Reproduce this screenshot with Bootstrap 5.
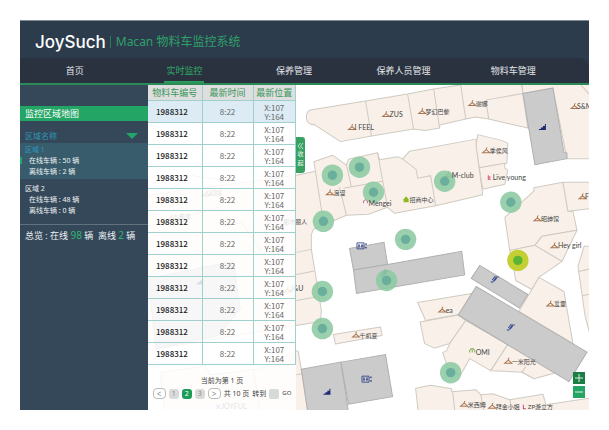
<!DOCTYPE html>
<html lang="zh-CN">
<head>
<meta charset="utf-8">
<meta name="viewport" content="width=device-width, initial-scale=1">
<title>JoySuch Macan 物料车监控系统</title>
<link href="https://cdn.jsdelivr.net/npm/bootstrap@5.3.0/dist/css/bootstrap.min.css" rel="stylesheet">
<style>
  :root { --green: #22a565; --green-dark: #2c8a57; --ink: #2c3c4d; }
  body { font-family: "Noto Sans", "Noto Sans CJK SC", sans-serif; font-size: 9px; line-height: 12px; background: #fff; }
  button, input { font: inherit; color: inherit; }
  .page { padding: 20px; }
  .app { background: var(--ink); border-top: 1px solid #7f8c96; }
  .brand-bar { height: 37px; padding: 5px 15px 0; }
  .brand-name { font: 500 17px/24px Inter, "Liberation Sans", sans-serif; color: #fff; }
  .brand-title { font-size: 12px; line-height: 12px; color: #2fa068; border-left: 1px solid #2b7a59; padding-left: 5px; margin-left: 4px; }
  .main-nav { background: #2a3240; border-bottom: 2px solid var(--green-dark); border-top-right-radius: 10px; padding-right: 21px; }
  .main-nav .nav-link { padding: 6px 2px 3px; color: #e4e7ea; line-height: 14px; border-bottom: 2px solid transparent; }
  .main-nav .nav-link.active { color: #2fa864; border-color: #2c9a5a; }

  .side { width: 128px; background: #34485a; color: #eef2f4; padding-top: 21px; }
  .side-title { background: var(--green); color: #fff; font-size: 9px; line-height: 15px; padding-left: 5px; margin: 0 0 8px; font-weight: 400; }
  .side-head { color: #2e97b3; font-size: 8px; line-height: 14px; padding: 0 10px 0 5px; }
  .caret { border: 6px solid transparent; border-top: 6px solid var(--green); border-bottom: 0; }
  .zone { display: block; width: 100%; text-align: left; border: 0; background: none; font-size: 7px; line-height: 11px; padding: 1px 0 2px 5px; }
  .zone.current { background: #385c6b; }
  .zone.current .zone-name { color: #2a9bc0; }
  .zone + .zone { padding-top: 4px; }
  .zone-line { display: block; padding-left: 4px; }
  .zone-mark { width: 2px; height: 7px; left: 0; top: 14px; background: var(--green); }
  .summary { border-top: 1px solid #60717f; margin-top: 6px; padding: 4px 0 0 5px; white-space: nowrap; }
  .summary b { font-weight: 400; font-size: 10px; color: #31b46e; }

  .map-area { background: #fff; }
  .map-svg { left: 0; top: 0; }
  .panel { width: 148px; background: rgba(255,255,255,.84); }
  .cars { width: 100%; table-layout: fixed; text-align: center; border-collapse: collapse; }
  .cars th { background: #dedede; color: #39965c; font-weight: 400; font-size: 9px; line-height: 15px; height: 15px; padding: 0; white-space: nowrap; }
  .cars td { height: 22px; padding: 0; font-family: "Noto Sans CJK SC", sans-serif; font-size: 8px; line-height: 9px; color: #666; }
  .cars td, .cars th { border-right: 1px solid #9fd0cd; border-bottom: 1px solid #9fd0cd; }
  .cars td:first-child { color: #222; font-weight: 500; text-align: left; padding-left: 8px; }
  .cars .picked td { background: #dcebf4; }
  .col-id { width: 54px; } .col-time { width: 51px; }
  .pager { font-size: 7px; line-height: 11px; color: #444; padding-top: 10px; }
  .pager-row { gap: 3px; margin-top: 2px; }
  .page-btn { border: 0; border-radius: 3px; background: #d8dbda; color: #888; width: 10px; height: 10px; padding: 0; line-height: 10px; font-size: 7px; }
  .page-btn.on { background: #1c9c58; color: #fff; }
  .step-btn { border: 1px solid #bbb; border-radius: 4px; background: #fff; color: #888; width: 13px; height: 11px; padding: 0; line-height: 8px; font-size: 8px; }
  .page-input { width: 10px; height: 10px; border: 0; border-radius: 2px; background: #d6dad9; padding: 0; }
  .go-btn { border: 0; background: none; padding: 0; font-size: 6px; }
  .fold-btn { left: 100%; top: 52px; width: 9px; height: 36px; border: 0; border-radius: 0 3px 3px 0; background: #38a162; color: #e9f7ee; padding: 0; font-size: 6px; line-height: 9px; }
  .fold-btn span, .fold-btn svg { display: block; margin: 0 auto; }
  .zoom-box { right: 4px; bottom: 12px; gap: 2px; }
  .zoom-box button { width: 12px; height: 12px; padding: 0; border: 0; background: var(--green); display: flex; }
  .zoom-box button:first-child { background: #1b7e45; }

  .shop { fill: #f9f1e9; stroke: #cfcac2; stroke-width: 1; stroke-linejoin: round; }
  .hall { fill: #cbcbcb; stroke: #b0b0b0; stroke-width: 1; }
  .wall { fill: none; stroke: #cfcac2; }
  .names text { font-family: Lato, "Noto Sans CJK SC", sans-serif; font-size: 7px; fill: #444; }
  .names .cn { font-size: 6px; }
  .hanger { fill: none; stroke: #a87652; stroke-width: 1; }
</style>
<script src="https://cdn.jsdelivr.net/npm/bootstrap@5.3.0/dist/js/bootstrap.bundle.min.js"></script>
</head>
<body>
<div class="page min-vh-100 d-flex flex-column">
  <div class="app flex-grow-1 d-flex flex-column">
    <header>
      <div class="brand-bar d-flex align-items-center">
        <span class="brand-name">JoySuch</span>
        <span class="brand-title">Macan 物料车监控系统</span>
      </div>
      <nav class="main-nav">
        <ul class="nav nav-fill row row-cols-5 g-0 flex-nowrap">
          <li class="col d-flex justify-content-center"><a class="nav-link" href="#">首页</a></li>
          <li class="col d-flex justify-content-center"><a class="nav-link active" aria-current="page" href="#">实时监控</a></li>
          <li class="col d-flex justify-content-center"><a class="nav-link" href="#">保养管理</a></li>
          <li class="col d-flex justify-content-center"><a class="nav-link" href="#">保养人员管理</a></li>
          <li class="col d-flex justify-content-center"><a class="nav-link" href="#">物料车管理</a></li>
        </ul>
      </nav>
    </header>

    <div class="d-flex flex-grow-1">
      <aside class="side flex-shrink-0">
        <h1 class="side-title">监控区域地图</h1>
        <div class="side-head d-flex justify-content-between align-items-center"><span>区域名称</span><span class="caret"></span></div>
        <button type="button" class="zone current position-relative"><span class="zone-mark position-absolute"></span><span class="zone-name">区域 1</span><span class="zone-line">在线车辆 : 50 辆</span><span class="zone-line">离线车辆 : 2 辆</span></button>
        <button type="button" class="zone"><span class="zone-name">区域 2</span><span class="zone-line">在线车辆 : 48 辆</span><span class="zone-line">离线车辆 : 0 辆</span></button>
        <div class="summary">总览 : 在线 <b>98</b> 辆&nbsp; 离线 <b>2</b> 辆</div>
      </aside>

      <main class="map-area flex-grow-1 position-relative d-flex">
        <svg class="map-svg position-absolute w-100 h-100" viewBox="148 85 440 325" preserveAspectRatio="xMinYMin slice" role="img" aria-label="监控区域地图">
          <defs>
            <path id="hg" class="hanger" d="M0 5.5L3.500 2.500L7 5.500ZM3.500 2.500V1.500Q3.500 .5 4.500 .5"/>
            <g id="car"><circle r="10.700" fill="#8cc9a3" fill-opacity=".88"/><circle r="4.700" fill="#6aaf9c"/></g>
            <path id="stair" d="M0 6V5H2V3.500H4V2H6V0H7V6Z" fill="#1d2b73"/>
            <g id="lift" fill="none" stroke="#24397f" stroke-width=".8"><path d="M.5 .5H7.500V6.500H.5Z"/><path d="M2.500 1.500V5.500M5.500 1.500V5.500M1.500 3.500H3.500M4.500 3.500H6.500"/><path d="M8.500 2.500L9.500 1L10 2.500M8.500 4.500L9.500 6L10 4.500"/></g>
            <path id="esc" d="M0 6.500H2L5.500 1.500H8M1.500 4.500L4.500 .5M3.500 5.500L6 2.500" fill="none" stroke="#3a4b8c"/>
          </defs>

          <g class="shop">
            <path d="M310 110L365 101L407 94L433 89L460 85V80H521V85L522 93.500L527 128L488 119L475 117L465 119L439 125V128L425 130.500L413 129L371 136L340 141.500L314 124.500Q307 125 306 118Q306 111 310 110Z"/>
            <path d="M521 80H592V158.500H566L552 88L522 93.500Z"/>
            <path d="M477 134.500L500 140L507 143L506 163L478.500 167.500L475 147Z"/>
            <path d="M478.500 167.500L504 163V168L507 170L504 184L482 189Z"/>
            <path d="M402 159L409 151L475.500 139V147L482 194.500L435 205.500L394 213L387 207L368 214L346 215L313 229L311 234V249L321 310L320 321L290 326L148 350V195L296 175L315 171L313.500 161.500L332 155L346 165L348 159L377 152.500L379 159.500L397 156.500Z"/>
            <path d="M504 217L533 191V187.500L562 182L567 211L572 211L576 230L541 236L534 245L509 250Z"/>
            <path d="M562 182H592V208L567 211Z"/>
            <path d="M541 236L576 230L561 261L534 245Z"/>
            <path d="M509 250L534 245L561 261L538 277L531 289L515 280Z"/>
            <path d="M538 277L563 291L572 343L518 311Z"/>
            <path d="M592 246H583L577 266L584 315L592 345Z"/>
            <path d="M417 302L471 293L458 314L425 320Z"/>
            <path d="M419.500 321.500L458 314.500L465 320L449 343L434 347.500L424 343Z"/>
            <path d="M465 320L507 344L490 370L469 358L460 374L449 373L442 352L446 350L449 343Z"/>
            <path d="M507 344L555 372L533 378L521 371.500L490 370Z"/>
            <path d="M415 387.500L430 384.500L451 388V391L475 389L480 394L492 393L509 399L542 393.500L545 404L592 397V415H418Z"/>
            <path d="M333 334L380 326.500L381.500 335L335 343.500Z"/>
            <path d="M160 372L205 365L210 374L260 368L296 350L298 351L301 369L308 415H165Z"/>
          </g>
          <path class="wall" d="M402 159L415.500 169L417 178L430 175.500L435 205.500M365 101L371 136M407 94L413 129M433 89L439 128M460 85L465 119M488 119L485 100L522 93.500M580 85L589 95M315 171L324 228M346 165L351 187M343 188L382 181M377 152.500L387 207M339 187L346 215M296 252L311 249M296 274L314 270.500M296 300L318 296M577.500 271L589 268.500M581.500 295L589 294M452 391L454 410M480 394L483 410M509 399L511 410M533 378L521 371.500L525 366M148 208L190 175L222 180V206L148 226M240 220L262 252M253 370L260 410M296 374L302 373"/>
          <g class="hall">
            <path d="M522 93.500L552 88L563 152L566 153V158.500L534 164.500Z"/>
            <path d="M349 248L383.500 242L387 264L353 269.500Z"/>
            <path d="M353 269.500L387 264L461 251L464 274.500L356 293Z"/>
            <path d="M479 265L527 294L518.500 307.500L470.500 278Z"/>
            <path d="M475.500 286L586 351.500L568 381L457.500 314.500Z"/>
            <path d="M301 368.500L340.500 361.500L348.500 415H308Z"/>
            <path d="M340.500 361.500L385 354L392 396L348 403.500Z"/>
            <path d="M148 278L233 261L240 308L218 335L156 348Z"/>
          </g>

          <use href="#stair" x="538" y="124"/><use href="#stair" x="323" y="388"/><use href="#stair" x="196" y="278"/>
          <use href="#lift" x="356" y="242"/><use href="#lift" x="361" y="375"/>
          <use href="#esc" x="490" y="275"/><use href="#esc" x="506" y="323"/><use href="#esc" x="380" y="269"/>

          <use href="#hg" x="348" y="124"/><use href="#hg" x="382" y="111"/><use href="#hg" x="418" y="108"/><use href="#hg" x="468" y="100"/><use href="#hg" x="570" y="103"/><use href="#hg" x="482" y="147"/><use href="#hg" x="326" y="189"/><use href="#hg" x="444" y="171"/><use href="#hg" x="533" y="215"/><use href="#hg" x="550" y="242"/><use href="#hg" x="578" y="193"/><use href="#hg" x="438" y="306"/><use href="#hg" x="546" y="300"/><use href="#hg" x="352" y="331"/><use href="#hg" x="504" y="357"/><use href="#hg" x="460" y="400"/><use href="#hg" x="488" y="402"/><use href="#hg" x="203" y="190"/><use href="#hg" x="168" y="214"/><use href="#hg" x="284" y="286"/>
          <path d="M403 199L405.500 196L408 199V202H403Z" fill="#8cba1c"/>
          <path d="M469 352V350Q471.500 346 474 350V352M471.500 349V352" fill="none" stroke="#7fae55"/>
          <path d="M487.500 175V179H490M489 176V178" fill="none" stroke="#d44a72"/>
          <path d="M363 203V201Q365 198 367 201V203" fill="none" stroke="#b79"/>
          <path d="M522.500 404V408H525" fill="none" stroke="#c2477a"/>
          <path d="M216 404L220 408M220 404L216 408" stroke="#6b6bd0"/>

          <g>
            <use href="#car" x="332" y="175"/><use href="#car" x="359" y="167"/><use href="#car" x="373" y="192"/>
            <use href="#car" x="444" y="181"/><use href="#car" x="510" y="202"/><use href="#car" x="323" y="221"/>
            <use href="#car" x="405" y="239"/><use href="#car" x="386" y="280"/><use href="#car" x="322" y="291"/>
            <use href="#car" x="322" y="328"/><use href="#car" x="450" y="372"/>
            <circle cx="517" cy="260" r="10.700" fill="#c3cf32"/><circle cx="517" cy="260" r="4.700" fill="#5cb531"/>
          </g>

          <g class="names">
            <text x="354" y="130">I FEEL</text><text x="389" y="117">ZUS</text><text class="cn" x="425" y="114">梦幻巴黎</text>
            <text class="cn" x="475" y="106">谢娜</text><text x="576" y="109">S&amp;M</text><text class="cn" x="489" y="153">季侯风</text>
            <text x="451" y="178">M-club</text><text x="492" y="180">Live young</text><text class="cn" x="333" y="195">浪漫</text>
            <text x="368" y="206">Mengei</text><text class="cn" x="409" y="202">招商中心</text><text class="cn" x="283" y="224">都市丽人</text>
            <text class="cn" x="540" y="221">昭绅馆</text><text x="557" y="248">Hey girl</text><text x="584" y="199">F</text>
            <text x="445" y="312">ea</text><text class="cn" x="553" y="306">爱童</text><text class="cn" x="359" y="337">千机变</text>
            <text x="475" y="354">OMI</text><text class="cn" x="511" y="363">一米阳光</text><text class="cn" x="467" y="406">米西姆</text>
            <text class="cn" x="495" y="408">拜金小姐</text><text class="cn" x="527" y="408">ZP游立方</text>
            <text x="209" y="196">K88</text><text class="cn" x="174" y="219">E·部落</text><text x="290" y="291">J&amp;U</text><text x="221" y="408">JOYFUL</text>
          </g>
        </svg>

        <section class="panel position-relative flex-shrink-0">
          <table class="cars">
            <colgroup><col class="col-id"><col class="col-time"><col></colgroup>
            <thead><tr><th scope="col">物料车编号</th><th scope="col">最新时间</th><th scope="col">最新位置</th></tr></thead>
            <tbody>
              <tr class="picked"><td>1988312</td><td>8:22</td><td>X:107<br>Y:164</td></tr>
              <tr><td>1988312</td><td>8:22</td><td>X:107<br>Y:164</td></tr>
              <tr><td>1988312</td><td>8:22</td><td>X:107<br>Y:164</td></tr>
              <tr><td>1988312</td><td>8:22</td><td>X:107<br>Y:164</td></tr>
              <tr><td>1988312</td><td>8:22</td><td>X:107<br>Y:164</td></tr>
              <tr><td>1988312</td><td>8:22</td><td>X:107<br>Y:164</td></tr>
              <tr><td>1988312</td><td>8:22</td><td>X:107<br>Y:164</td></tr>
              <tr><td>1988312</td><td>8:22</td><td>X:107<br>Y:164</td></tr>
              <tr><td>1988312</td><td>8:22</td><td>X:107<br>Y:164</td></tr>
              <tr><td>1988312</td><td>8:22</td><td>X:107<br>Y:164</td></tr>
              <tr><td>1988312</td><td>8:22</td><td>X:107<br>Y:164</td></tr>
              <tr><td>1988312</td><td>8:22</td><td>X:107<br>Y:164</td></tr>
            </tbody>
          </table>
          <div class="pager">
            <div class="text-center">当前为第 1 页</div>
            <div class="pager-row d-flex align-items-center justify-content-center text-nowrap">
              <button type="button" class="step-btn" aria-label="上一页">&lt;</button>
              <button type="button" class="page-btn">1</button>
              <button type="button" class="page-btn on">2</button>
              <button type="button" class="page-btn">3</button>
              <button type="button" class="step-btn" aria-label="下一页">&gt;</button>
              <span>共 10 页</span>
              <label for="goto">转到</label>
              <input id="goto" class="page-input" type="text">
              <button type="button" class="go-btn">GO</button>
            </div>
          </div>
          <button type="button" class="fold-btn position-absolute"><svg width="7" height="8" viewBox="0 0 7 8"><path d="M3.500 1L1 4L3.500 7M6 1L3.500 4L6 7" fill="none" stroke="#d5f0df" stroke-width=".8"/></svg><span>收</span><span>起</span></button>
        </section>

        <div class="zoom-box position-absolute d-flex flex-column">
          <button type="button" aria-label="放大"><svg width="12" height="12" viewBox="0 0 12 12"><path d="M2 6H10M6 2V10" stroke="#d8f0e2"/></svg></button>
          <button type="button" aria-label="缩小"><svg width="12" height="12" viewBox="0 0 12 12"><path d="M2 6H10" stroke="#d8f0e2"/></svg></button>
        </div>
      </main>
    </div>
  </div>
</div>
</body>
</html>
